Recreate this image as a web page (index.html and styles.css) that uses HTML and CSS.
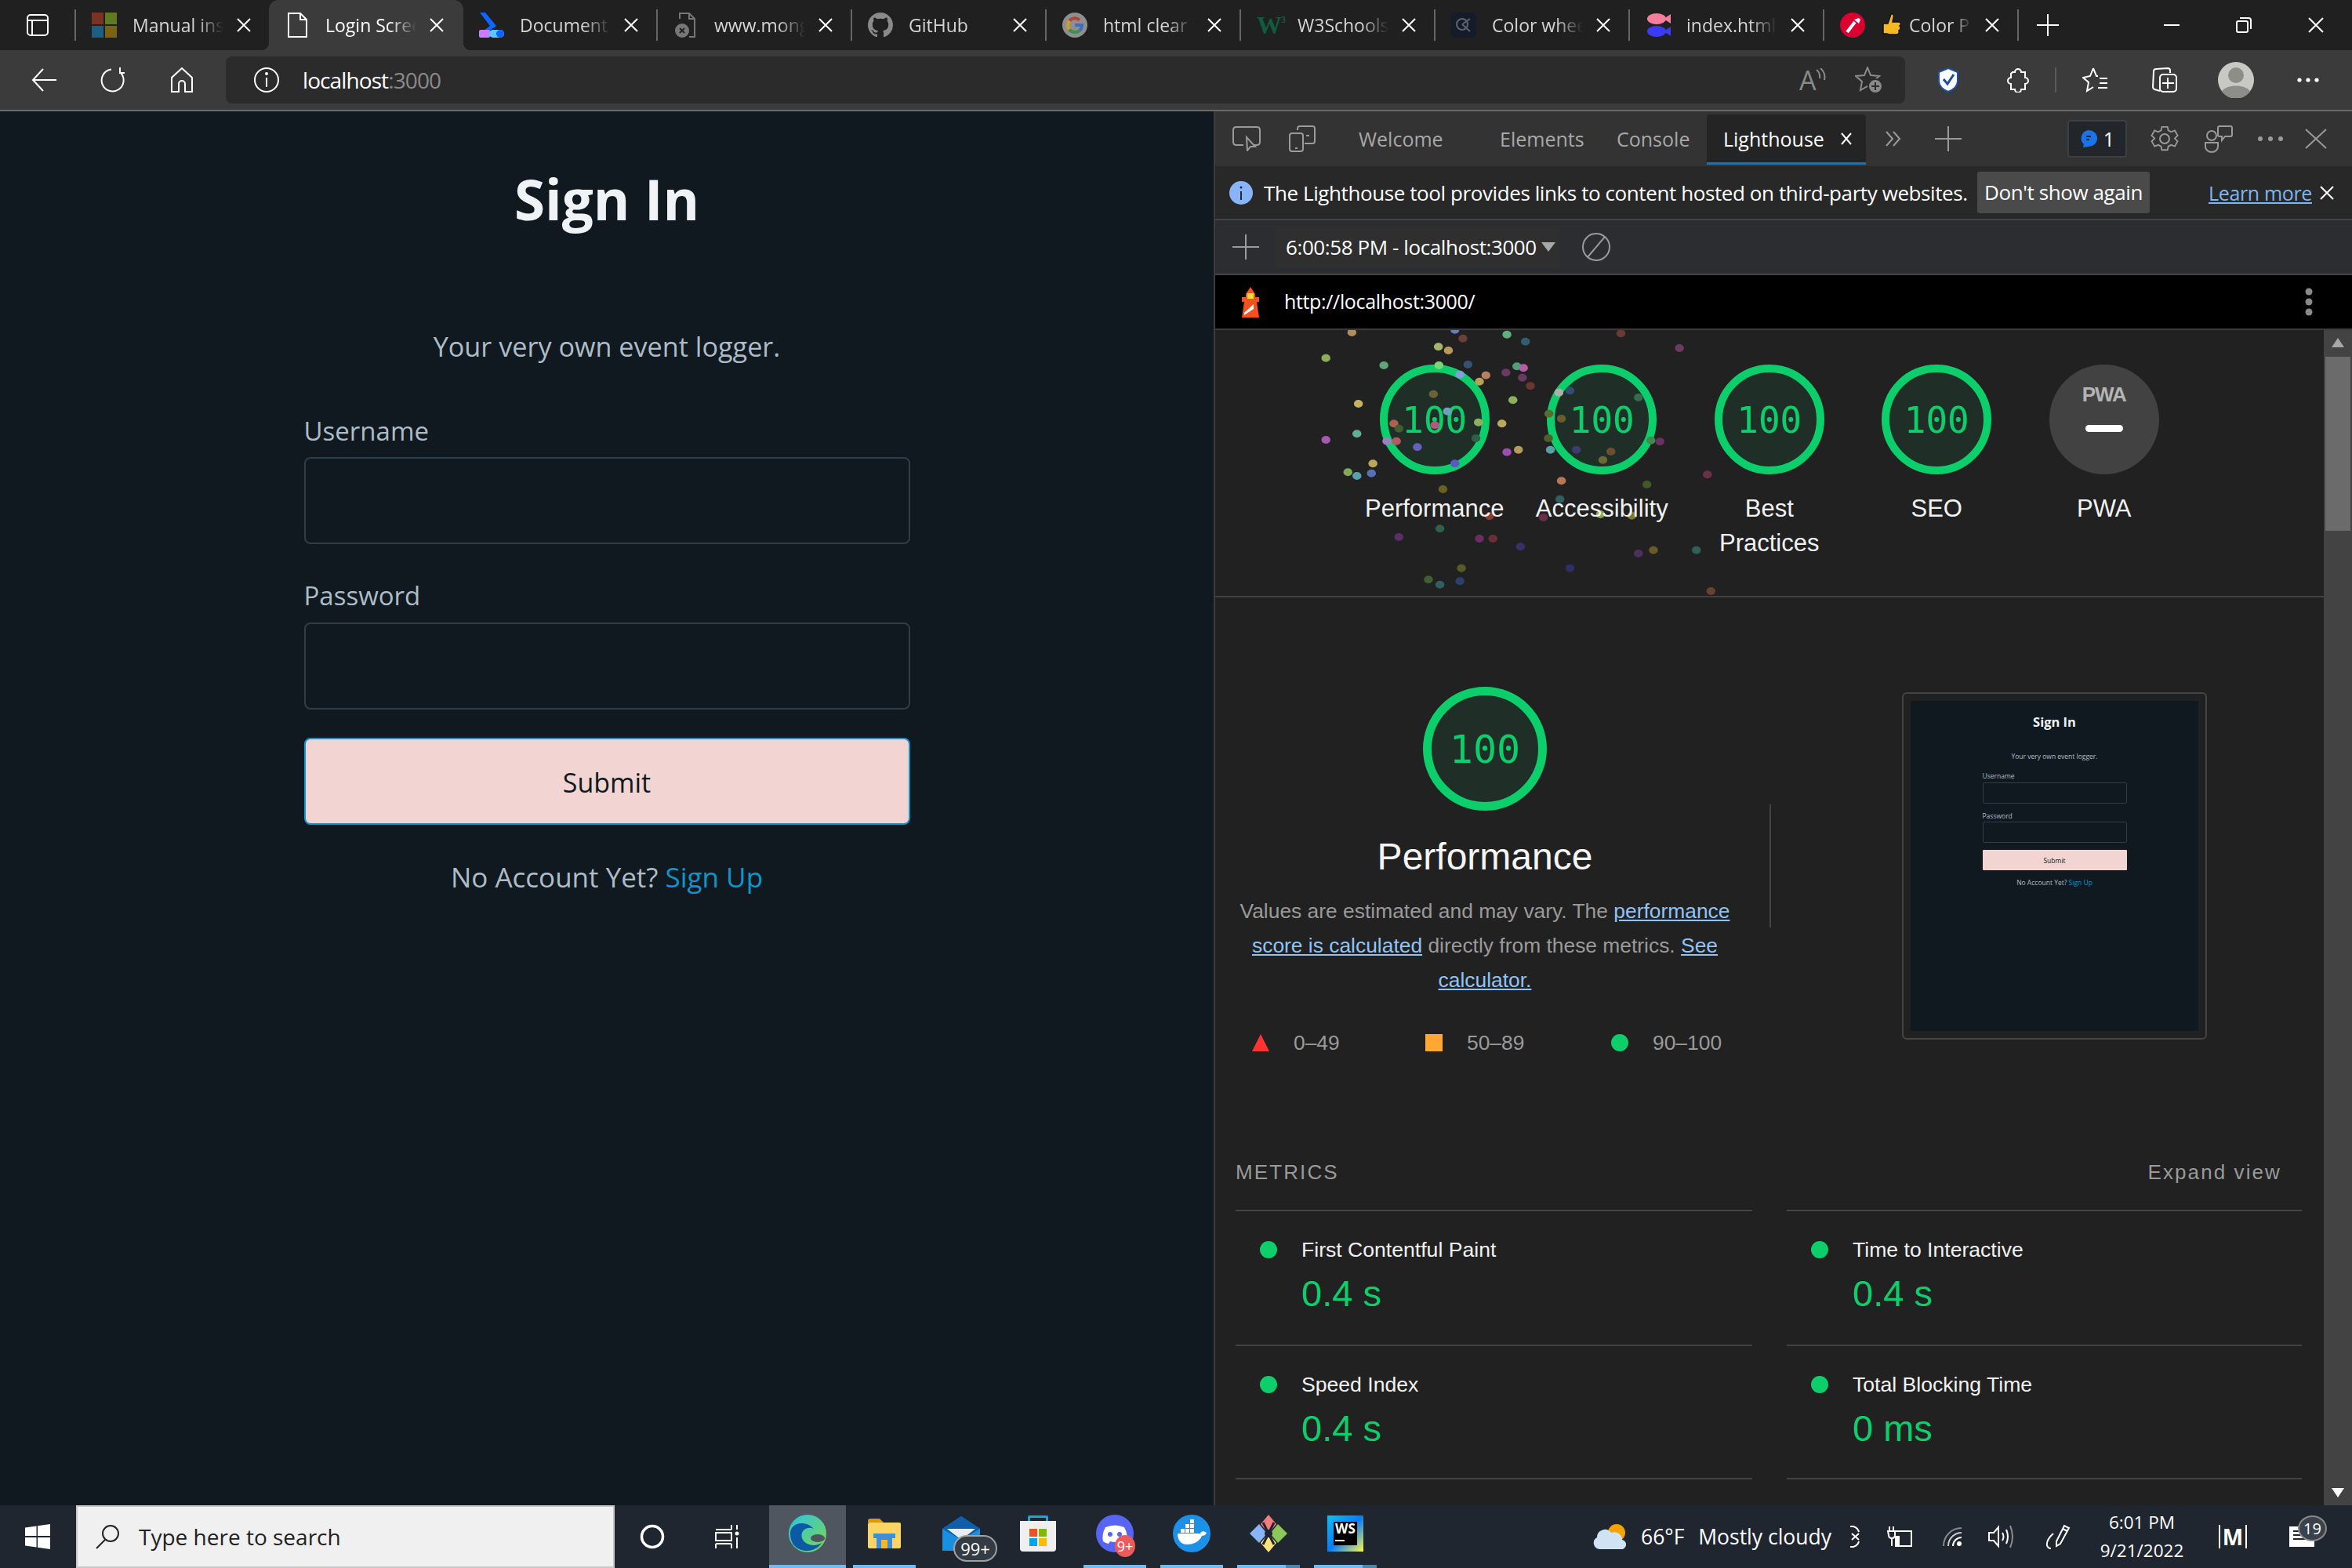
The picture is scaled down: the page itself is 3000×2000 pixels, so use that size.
FILE: index.html
```html
<!DOCTYPE html>
<html lang="en">
<head>
    <meta charset="UTF-8">
    <title>Login Screen - Lighthouse</title>
    <link rel="stylesheet" href="styles.css">
</head>
<body>
<div class="window">

    <!-- tab strip -->
    <div class="tabstrip">
        <svg class="sidebar-icon" width="28" height="28" viewBox="0 0 28 28" fill="none" stroke="#fff" stroke-width="2"><rect x="1" y="1" width="26" height="26" rx="4"/><path d="M1 8H27M7 8V27" /></svg>
        <i class="tab-sep"></i>
        <div class="tab">
            <svg class="favicon" viewBox="0 0 32 32"><rect width="15" height="15" fill="#7a3322"/><rect x="17" width="15" height="15" fill="#5f7a20"/><rect y="17" width="15" height="15" fill="#1c5f80"/><rect x="17" y="17" width="15" height="15" fill="#7a6414"/></svg>
            <span class="tab-title">Manual installation</span>
            <svg class="tab-close" viewBox="0 0 18 18"><path d="M1 1L17 17M17 1L1 17"/></svg>
        </div>
        <div class="tab tab-active">
            <svg class="favicon" viewBox="0 0 32 32" fill="none" stroke="#fff" stroke-width="2"><path d="M5 1H20L28 9V31H5ZM20 1V9H28"/></svg>
            <span class="tab-title">Login Screen</span>
            <svg class="tab-close" viewBox="0 0 18 18"><path d="M1 1L17 17M17 1L1 17"/></svg>
        </div>
        <div class="tab">
            <svg class="favicon" viewBox="0 0 32 32"><path d="M1 0H8L22 17 8 27H1L14 17Z" fill="#0d66ff"/><rect y="22" width="14" height="10" rx="2" fill="#c77dff"/><rect x="13" y="22" width="19" height="10" rx="5" fill="#5cc6ff"/><circle cx="27" cy="27" r="5" fill="#0d66ff"/></svg>
            <span class="tab-title">Document</span>
            <svg class="tab-close" viewBox="0 0 18 18"><path d="M1 1L17 17M17 1L1 17"/></svg>
        </div>
        <i class="tab-sep"></i>
        <div class="tab">
            <svg class="favicon" viewBox="0 0 32 32" fill="none"><path d="M8 8V1H20L27 8V31H20M20 1V8H27" stroke="#777" stroke-width="2"/><circle cx="11" cy="23" r="9" fill="#777"/><path d="M8 20L14 26M14 20L8 26" stroke="#222" stroke-width="2"/></svg>
            <span class="tab-title">www.mongodb.com</span>
            <svg class="tab-close" viewBox="0 0 18 18"><path d="M1 1L17 17M17 1L1 17"/></svg>
        </div>
        <i class="tab-sep"></i>
        <div class="tab">
            <svg class="favicon" viewBox="0 0 16 16"><path fill="#8a8a8a" d="M8 0C3.58 0 0 3.58 0 8c0 3.54 2.29 6.53 5.47 7.59.4.07.55-.17.55-.38 0-.19-.01-.82-.01-1.49-2.01.37-2.53-.49-2.69-.94-.09-.23-.48-.94-.82-1.13-.28-.15-.68-.52-.01-.53.63-.01 1.08.58 1.23.82.72 1.21 1.87.87 2.33.66.07-.52.28-.87.51-1.07-1.78-.2-3.64-.89-3.64-3.95 0-.87.31-1.59.82-2.15-.08-.2-.36-1.02.08-2.12 0 0 .67-.21 2.2.82.64-.18 1.32-.27 2-.27.68 0 1.36.09 2 .27 1.53-1.04 2.2-.82 2.2-.82.44 1.1.16 1.92.08 2.12.51.56.82 1.27.82 2.15 0 3.07-1.87 3.75-3.65 3.95.29.25.54.73.54 1.48 0 1.07-.01 1.93-.01 2.2 0 .21.15.46.55.38A8.013 8.013 0 0016 8c0-4.42-3.58-8-8-8z"/></svg>
            <span class="tab-title">GitHub</span>
            <svg class="tab-close" viewBox="0 0 18 18"><path d="M1 1L17 17M17 1L1 17"/></svg>
        </div>
        <i class="tab-sep"></i>
        <div class="tab">
            <svg class="favicon" viewBox="0 0 32 32" fill="none"><circle cx="16" cy="16" r="16" fill="#8f8f8f"/><g stroke-width="4"><path d="M22 9.500A9 9 0 0 0 9 10.500" stroke="#b0443c"/><path d="M9 10.500A9 9 0 0 0 9 21.500" stroke="#c9a227"/><path d="M9 21.500A9 9 0 0 0 22 23" stroke="#3f8f4f"/><path d="M22 23A9 9 0 0 0 25 16H16" stroke="#3f6fc0"/></g></svg>
            <span class="tab-title">html clear form</span>
            <svg class="tab-close" viewBox="0 0 18 18"><path d="M1 1L17 17M17 1L1 17"/></svg>
        </div>
        <i class="tab-sep"></i>
        <div class="tab">
            <span class="favicon w3-logo">W<sup>3</sup></span>
            <span class="tab-title">W3Schools Online</span>
            <svg class="tab-close" viewBox="0 0 18 18"><path d="M1 1L17 17M17 1L1 17"/></svg>
        </div>
        <i class="tab-sep"></i>
        <div class="tab">
            <svg class="favicon" viewBox="0 0 32 32" fill="none"><rect width="32" height="32" rx="5" fill="#131c28"/><circle cx="14" cy="15" r="7" stroke="#5f656c" stroke-width="2"/><path d="M14 15L24 8M14 15L24 24" stroke="#5f656c" stroke-width="2"/></svg>
            <span class="tab-title">Color wheel</span>
            <svg class="tab-close" viewBox="0 0 18 18"><path d="M1 1L17 17M17 1L1 17"/></svg>
        </div>
        <i class="tab-sep"></i>
        <div class="tab">
            <svg class="favicon" viewBox="0 0 32 32"><ellipse cx="14" cy="8" rx="12" ry="7" fill="#f47e9b"/><path d="M23 8L32 2V14Z" fill="#f47e9b"/><ellipse cx="14" cy="24" rx="12" ry="7" fill="#3b3bf5"/><path d="M23 24L32 18V30Z" fill="#3b3bf5"/></svg>
            <span class="tab-title">index.html</span>
            <svg class="tab-close" viewBox="0 0 18 18"><path d="M1 1L17 17M17 1L1 17"/></svg>
        </div>
        <i class="tab-sep"></i>
        <div class="tab tab-picker">
            <svg class="favicon" viewBox="0 0 32 32"><circle cx="16" cy="16" r="16" fill="#dc0030"/><path d="M9 25L19 12" stroke="#fff" stroke-width="4"/><path d="M18 9L24 7 26 9 24 14Z" fill="#fff"/></svg>
            <svg class="thumb-emoji" width="24" height="32" viewBox="0 0 24 32"><path d="M1 14H7L11 2C14 1 15 4 14 7L13 12H21C24 12 24 16 22 17 24 19 23 22 21 23 22 26 20 28 18 28H9C7 28 7 27 6 27H1Z" fill="#f7b923" stroke="#111" stroke-width="1.500"/></svg>
            <span class="tab-title">Color Picker</span>
            <svg class="tab-close" viewBox="0 0 18 18"><path d="M1 1L17 17M17 1L1 17"/></svg>
        </div>
        <i class="tab-sep"></i>
        <svg class="new-tab" width="28" height="28" viewBox="0 0 28 28"><path d="M14 0V28M0 14H28" stroke="#fff" stroke-width="2"/></svg>
        <div class="window-controls">
            <svg width="20" height="2" viewBox="0 0 20 2"><path d="M0 1H20" stroke="#fff" stroke-width="2"/></svg>
            <svg width="20" height="20" viewBox="0 0 20 20" fill="none" stroke="#fff" stroke-width="2"><rect x="1" y="5" width="14" height="14" rx="2"/><path d="M5 1H16Q19 1 19 4V15"/></svg>
            <svg width="20" height="20" viewBox="0 0 20 20"><path d="M1 1L19 19M19 1L1 19" stroke="#fff" stroke-width="2"/></svg>
        </div>
    </div>

    <!-- address bar -->
    <div class="toolbar">
        <svg class="tb-back" width="32" height="30" viewBox="0 0 32 30" fill="none" stroke="#fff" stroke-width="2"><path d="M2 15H32M15 1L2 15L15 29"/></svg>
        <svg class="tb-reload" width="32" height="32" viewBox="0 0 32 32" fill="none" stroke="#fff" stroke-width="2"><path d="M25 6A14 14 0 1 1 14 2.500"/><path d="M25 0V7H31"/></svg>
        <svg class="tb-home" width="28" height="32" viewBox="0 0 28 32" fill="none" stroke="#fff" stroke-width="2"><path d="M14 1L1 13V31H10V21A4 4 0 0 1 18 21V31H27V13Z"/></svg>
        <div class="address">
            <svg class="addr-info" width="32" height="32" viewBox="0 0 32 32" fill="none" stroke="#fff" stroke-width="2"><circle cx="16" cy="16" r="15"/><path d="M16 13V25"/><circle cx="16" cy="8" r="1"/></svg>
            <span class="addr-text">localhost<span class="addr-port">:3000</span></span>
            <svg class="addr-read" width="34" height="30" viewBox="0 0 34 30" fill="none" stroke="#8a8a8a" stroke-width="2"><text x="0" y="28" fill="#8a8a8a" stroke="none" font-family="Open Sans, sans-serif" font-size="34">A</text><path d="M22 2Q27 6 26 13M27 0Q34 6 32 15"/></svg>
            <svg class="addr-fav" width="36" height="34" viewBox="0 0 36 34" fill="none" stroke="#8a8a8a" stroke-width="2"><path d="M16 1L20 11 31 12 23 19 25 30 16 25 7 30 9 19 1 12 12 11Z"/><circle cx="26" cy="25" r="9" fill="#8a8a8a" stroke="#2b2b2b"/><path d="M26 20V30M21 25H31" stroke="#2b2b2b"/></svg>
        </div>
        <svg class="tb-shield" width="26" height="32" viewBox="0 0 26 32"><path d="M13 1L25 6V17C25 25 18 29 13 31 8 29 1 25 1 17V6Z" fill="#fff" stroke="#1d4fa8" stroke-width="2"/><path d="M7 15L12 21L20 9" fill="none" stroke="#1d4fa8" stroke-width="3"/></svg>
        <svg class="tb-puzzle" width="28" height="32" viewBox="0 0 28 32" fill="none" stroke="#fff" stroke-width="2"><path d="M7 6H10A4 4 0 0 1 18 6H23V13A4 4 0 0 1 23 21V28H18A4 4 0 0 1 10 28H5V21A4 4 0 0 1 5 13V8Z"/></svg>
        <i class="tb-sep"></i>
        <svg class="tb-favs" width="32" height="32" viewBox="0 0 32 32" fill="none" stroke="#fff" stroke-width="2"><path d="M14 1L18 11 20 11M14 1L10 11 1 13 8 19 6 30 14 25M22 14H32M22 20H32M20 26H32"/></svg>
        <svg class="tb-collect" width="32" height="32" viewBox="0 0 32 32" fill="none" stroke="#fff" stroke-width="2"><path d="M10 30L3 28Q1 27 1 25L2 5Q2 2 5 2L20 1Q23 1 23 4V7"/><rect x="10" y="9" width="21" height="22" rx="4"/><path d="M20 13V27M13 20H28"/></svg>
        <svg class="tb-avatar" width="46" height="46" viewBox="0 0 46 46"><circle cx="23" cy="23" r="23" fill="#c9c9c4"/><circle cx="23" cy="17" r="10" fill="#8d8d89"/><path d="M5 38C9 28 37 28 41 38A23 23 0 0 1 5 38Z" fill="#8d8d89"/></svg>
        <svg class="tb-more" width="28" height="6" viewBox="0 0 28 6" fill="#fff"><circle cx="3" cy="3" r="2.600"/><circle cx="14" cy="3" r="2.600"/><circle cx="25" cy="3" r="2.600"/></svg>
    </div>

    <div class="main">
        <!-- the page under test -->
        <div class="page">
            <h1 class="login-title">Sign In</h1>
            <p class="login-tag">Your very own event logger.</p>
            <div class="login-form">
                <label class="login-label login-label-first">Username</label>
                <div class="login-input login-input-first"></div>
                <label class="login-label">Password</label>
                <div class="login-input"></div>
                <div class="login-submit">Submit</div>
            </div>
            <p class="login-foot">No Account Yet? <a class="login-link">Sign Up</a></p>
        </div>

        <!-- devtools -->
        <div class="devtools">
            <div class="dt-tabs">
                <svg class="dt-inspect" width="36" height="32" viewBox="0 0 36 32" fill="none" stroke="#9a9a9a" stroke-width="2"><path d="M14 24H5Q1 24 1 20V5Q1 1 5 1H31Q35 1 35 5V20Q35 24 31 24H28"/><path d="M18 14L19 31 23 26 29 26Z"/></svg>
                <svg class="dt-device" width="34" height="34" viewBox="0 0 34 34" fill="none" stroke="#9a9a9a" stroke-width="2"><path d="M11 6V4Q11 1 14 1H30Q33 1 33 4V20Q33 23 30 23H20"/><rect x="1" y="10" width="17" height="23" rx="3"/><path d="M22 13H26M8 29H11"/></svg>
                <span class="dt-tab dt-tab-welcome">Welcome</span>
                <span class="dt-tab dt-tab-elements">Elements</span>
                <span class="dt-tab dt-tab-console">Console</span>
                <div class="dt-tab-active">
                    <span>Lighthouse</span>
                    <svg width="16" height="16" viewBox="0 0 16 16"><path d="M2 1L14 15M14 1L2 15" stroke="#fff" stroke-width="2"/></svg>
                </div>
                <svg class="dt-overflow" width="22" height="20" viewBox="0 0 22 20" fill="none" stroke="#9a9a9a" stroke-width="2"><path d="M2 1L10 10 2 19M11 1L19 10 11 19"/></svg>
                <svg class="dt-plus" width="34" height="32" viewBox="0 0 34 32"><path d="M17 0V32M0 16H34" stroke="#9a9a9a" stroke-width="2"/></svg>
                <div class="dt-badge">
                    <svg width="22" height="22" viewBox="0 0 22 22"><path d="M11 0A11 10.500 0 0 1 11 21L4 22 5 18A11 10.500 0 0 1 11 0Z" fill="#1a73e8"/><path d="M8 8H14M8 12H12" stroke="#22252a" stroke-width="2"/></svg>
                    <span>1</span>
                </div>
                <svg class="dt-gear" width="36" height="36" viewBox="0 0 36 36" fill="none" stroke="#9a9a9a" stroke-width="2"><path d="M14 2H22L23 7 27 9 32 7 36 14 32 18 36 22 32 29 27 27 23 29 22 34H14L13 29 9 27 4 29 0 22 4 18 0 14 4 7 9 9 13 7Z" transform="translate(1.500 1) scale(.92)"/><circle cx="18" cy="18" r="6"/></svg>
                <svg class="dt-people" width="36" height="36" viewBox="0 0 36 36" fill="none" stroke="#9a9a9a" stroke-width="2"><circle cx="9" cy="14" r="6"/><path d="M1 23H17V28A8 7 0 0 1 1 28Z"/><path d="M19 2H33Q35 2 35 4V13Q35 15 33 15H26L22 20V15H19Q17 15 17 13V4Q17 2 19 2Z"/></svg>
                <svg class="dt-more" width="34" height="6" viewBox="0 0 34 6" fill="#9a9a9a"><circle cx="4" cy="3" r="3"/><circle cx="17" cy="3" r="3"/><circle cx="30" cy="3" r="3"/></svg>
                <svg class="dt-close" width="28" height="26" viewBox="0 0 28 26"><path d="M1 1L27 25M27 1L1 25" stroke="#9a9a9a" stroke-width="2"/></svg>
            </div>

            <div class="dt-info">
                <svg class="info-icon" width="30" height="30" viewBox="0 0 30 30"><circle cx="15" cy="15" r="15" fill="#8ab4f8"/><path d="M15 13V24" stroke="#282828" stroke-width="2"/><circle cx="15" cy="8" r="1.500" fill="#282828"/></svg>
                <span class="info-text">The Lighthouse tool provides links to content hosted on third-party websites.</span>
                <span class="info-btn">Don't show again</span>
                <a class="info-learn">Learn more</a>
                <svg class="info-close" width="18" height="18" viewBox="0 0 18 18"><path d="M1 1L17 17M17 1L1 17" stroke="#fff" stroke-width="2"/></svg>
            </div>

            <div class="dt-bar">
                <svg class="bar-plus" width="34" height="32" viewBox="0 0 34 32"><path d="M17 0V32M0 16H34" stroke="#9a9a9a" stroke-width="2"/></svg>
                <div class="bar-select">
                    <span>6:00:58 PM - localhost:3000</span>
                    <i class="bar-caret"></i>
                </div>
                <svg class="bar-clear" width="36" height="36" viewBox="0 0 36 36" fill="none" stroke="#9a9a9a" stroke-width="2"><circle cx="18" cy="18" r="17"/><path d="M7 31L29 5"/></svg>
            </div>

            <div class="dt-url">
                <svg class="url-logo" width="26" height="39" viewBox="0 0 26 39"><path d="M13 0L19 9V13H24V19H21L24 39H2L5 19H2V13H7V9Z" fill="#f4511e"/><rect x="9" y="8" width="8" height="7" fill="#fdd835"/><path d="M5 33L17 22V28L5 36Z" fill="#fff"/></svg>
                <span class="url-text">http://localhost:3000/</span>
                <svg class="url-kebab" width="10" height="36" viewBox="0 0 10 36" fill="#8a8a8a"><circle cx="5" cy="5" r="4.500"/><circle cx="5" cy="18" r="4.500"/><circle cx="5" cy="31" r="4.500"/></svg>
            </div>

            <div class="dt-body">
                <div class="report">
                    <div class="gauges">
                        <svg class="confetti" width="1000" height="360" viewBox="0 0 1568 1080" preserveAspectRatio="none">
                            <ellipse cx="195" cy="42" fill="#b08d5c"/><ellipse cx="401" cy="32" fill="#5f7fc0"/><ellipse cx="417" cy="65" fill="#6b3f35"/><ellipse cx="505" cy="50" fill="#5fae7c"/><ellipse cx="542" cy="77" fill="#2f5f70"/><ellipse cx="733" cy="46" fill="#6b3a32"/><ellipse cx="850" cy="102" fill="#6b3a5f"/><ellipse cx="143" cy="140" fill="#8aae5a"/><ellipse cx="368" cy="97" fill="#a5b56f"/><ellipse cx="388" cy="111" fill="#b89a5a"/><ellipse cx="259" cy="168" fill="#5fa77a"/><ellipse cx="369" cy="168" fill="#78d878"/><ellipse cx="427" cy="165" fill="#355270"/><ellipse cx="525" cy="172" fill="#4f9f7a"/><ellipse cx="538" cy="178" fill="#b060a0"/><ellipse cx="503" cy="196" fill="#6a3a65"/><ellipse cx="411" cy="203" fill="#7fa0d8"/><ellipse cx="463" cy="206" fill="#b88060"/><ellipse cx="450" cy="230" fill="#b8a058"/><ellipse cx="536" cy="215" fill="#6a3a60"/><ellipse cx="552" cy="247" fill="#6b3632"/><ellipse cx="631" cy="265" fill="#2f4f70"/><ellipse cx="609" cy="272" fill="#b0b0a8"/><ellipse cx="358" cy="278" fill="#6b6338"/><ellipse cx="517" cy="301" fill="#8ab060"/><ellipse cx="768" cy="291" fill="#356b4f"/><ellipse cx="208" cy="315" fill="#c8b060"/><ellipse cx="589" cy="353" fill="#5a6a30"/><ellipse cx="386" cy="344" fill="#6f9fc0"/><ellipse cx="614" cy="372" fill="#6b5c30"/><ellipse cx="448" cy="386" fill="#90b060"/><ellipse cx="495" cy="391" fill="#b8a860"/><ellipse cx="279" cy="391" fill="#b06050"/><ellipse cx="289" cy="410" fill="#3f5f30"/><ellipse cx="361" cy="397" fill="#b05a80"/><ellipse cx="205" cy="430" fill="#5faf90"/><ellipse cx="143" cy="453" fill="#a858b0"/><ellipse cx="443" cy="447" fill="#2f6045"/><ellipse cx="588" cy="447" fill="#4a5f2a"/><ellipse cx="265" cy="458" fill="#9a80c0"/><ellipse cx="284" cy="458" fill="#b85860"/><ellipse cx="811" cy="460" fill="#6a3060"/><ellipse cx="793" cy="455" fill="#3f8a50"/><ellipse cx="326" cy="481" fill="#6860b8"/><ellipse cx="505" cy="500" fill="#9a50b0"/><ellipse cx="528" cy="491" fill="#b89a58"/><ellipse cx="592" cy="491" fill="#58a0a0"/><ellipse cx="644" cy="491" fill="#3f3a70"/><ellipse cx="713" cy="498" fill="#6a5030"/><ellipse cx="697" cy="530" fill="#6a6a30"/><ellipse cx="237" cy="544" fill="#b8a858"/><ellipse cx="401" cy="544" fill="#5858c8"/><ellipse cx="187" cy="577" fill="#80a858"/><ellipse cx="205" cy="591" fill="#58a0b0"/><ellipse cx="234" cy="581" fill="#5870b8"/><ellipse cx="906" cy="586" fill="#6a3048"/><ellipse cx="614" cy="610" fill="#b87858"/><ellipse cx="785" cy="624" fill="#3f5a28"/><ellipse cx="377" cy="642" fill="#6a6020"/><ellipse cx="611" cy="680" fill="#2f5f60"/><ellipse cx="470" cy="745" fill="#8a3a30"/><ellipse cx="578" cy="750" fill="#6a2f48"/><ellipse cx="692" cy="738" fill="#8aa850"/><ellipse cx="755" cy="743" fill="#7a7a30"/><ellipse cx="371" cy="793" fill="#2f6048"/><ellipse cx="289" cy="825" fill="#5a2f68"/><ellipse cx="450" cy="831" fill="#6a2f60"/><ellipse cx="477" cy="831" fill="#6a3038"/><ellipse cx="532" cy="862" fill="#38306a"/><ellipse cx="768" cy="888" fill="#4f2f60"/><ellipse cx="798" cy="875" fill="#6a5a28"/><ellipse cx="884" cy="875" fill="#2f6058"/><ellipse cx="414" cy="944" fill="#5a5a28"/><ellipse cx="631" cy="944" fill="#2f2f68"/><ellipse cx="348" cy="988" fill="#3f602f"/><ellipse cx="371" cy="1007" fill="#2f5f60"/><ellipse cx="411" cy="994" fill="#2f4068"/><ellipse cx="913" cy="1032" fill="#6b4030"/>
                        </svg>
                        <div class="gauge">
                            <div class="gauge-ring">100</div>
                            <div class="gauge-label">Performance</div>
                        </div>
                        <div class="gauge">
                            <div class="gauge-ring">100</div>
                            <div class="gauge-label">Accessibility</div>
                        </div>
                        <div class="gauge">
                            <div class="gauge-ring">100</div>
                            <div class="gauge-label">Best<br>Practices</div>
                        </div>
                        <div class="gauge">
                            <div class="gauge-ring">100</div>
                            <div class="gauge-label">SEO</div>
                        </div>
                        <div class="gauge">
                            <div class="gauge-ring gauge-pwa">
                                <span class="pwa-text">PWA</span>
                                <i class="pwa-dash"></i>
                            </div>
                            <div class="gauge-label">PWA</div>
                        </div>
                    </div>

                    <div class="perf-top">
                        <div class="perf-summary">
                            <div class="gauge-ring gauge-big">100</div>
                            <div class="perf-title">Performance</div>
                            <p class="perf-desc">Values are estimated and may vary. The <a>performance score is calculated</a> directly from these metrics. <a>See calculator.</a></p>
                            <div class="legend">
                                <div class="legend-item"><i class="mark-fail"></i>0–49</div>
                                <div class="legend-item"><i class="mark-avg"></i>50–89</div>
                                <div class="legend-item"><i class="mark-pass"></i>90–100</div>
                            </div>
                        </div>
                        <i class="perf-divider"></i>
                        <div class="thumb-frame">
                            <div class="thumb">
                                <div class="thumb-title">Sign In</div>
                                <div class="thumb-tag">Your very own event logger.</div>
                                <div class="thumb-form">
                                    <div class="thumb-label thumb-label-first">Username</div>
                                    <div class="thumb-input thumb-input-first"></div>
                                    <div class="thumb-label">Password</div>
                                    <div class="thumb-input"></div>
                                    <div class="thumb-submit">Submit</div>
                                </div>
                                <div class="thumb-foot">No Account Yet? <span>Sign Up</span></div>
                            </div>
                        </div>
                    </div>

                    <div class="metrics-head">
                        <span class="metrics-title">METRICS</span>
                        <span class="metrics-expand">Expand view</span>
                    </div>
                    <div class="metrics">
                        <div class="metric">
                            <div class="metric-name"><i class="mark-pass"></i>First Contentful Paint</div>
                            <div class="metric-value">0.4 s</div>
                        </div>
                        <div class="metric">
                            <div class="metric-name"><i class="mark-pass"></i>Time to Interactive</div>
                            <div class="metric-value">0.4 s</div>
                        </div>
                        <div class="metric">
                            <div class="metric-name"><i class="mark-pass"></i>Speed Index</div>
                            <div class="metric-value">0.4 s</div>
                        </div>
                        <div class="metric">
                            <div class="metric-name"><i class="mark-pass"></i>Total Blocking Time</div>
                            <div class="metric-value">0 ms</div>
                        </div>
                    </div>
                </div>
                <div class="scrollbar">
                    <i class="scroll-up"></i>
                    <i class="scroll-thumb"></i>
                    <i class="scroll-down"></i>
                </div>
            </div>
        </div>
    </div>

    <!-- windows taskbar -->
    <div class="taskbar">
        <svg class="tk-win" width="32" height="32" viewBox="0 0 32 32" fill="#fff"><path d="M0 4.500L14.500 2.500V15H0ZM16 2.300L32 0V15H16ZM0 17H14.500V29.500L0 27.500ZM16 17H32V32L16 29.700Z"/></svg>
        <div class="tk-search">
            <svg width="32" height="32" viewBox="0 0 32 32" fill="none" stroke="#222" stroke-width="2"><circle cx="20" cy="12" r="10"/><path d="M13 20L2 31"/></svg>
            <span>Type here to search</span>
        </div>
        <svg class="tk-cortana" width="32" height="32" viewBox="0 0 32 32" fill="none" stroke="#fff" stroke-width="3.500"><circle cx="16" cy="16" r="13.500"/></svg>
        <svg class="tk-tasks" width="31" height="30" viewBox="0 0 31 30" fill="none" stroke="#fff" stroke-width="2"><path d="M1 6H21M21 0V6M1 24H21M1 30V24M21 30V24M1 10H21V20H1Z"/><circle cx="28" cy="11" r="2.500" fill="#fff" stroke="none"/><path d="M28 16V30M28 0V6"/></svg>

        <div class="tk-apps">
            <div class="app app-current running">
                <svg width="48" height="48" viewBox="0 0 48 48"><defs><linearGradient id="edgeA" x1="0" y1="0" x2="1" y2="1"><stop offset="0" stop-color="#2cc3e0"/><stop offset="1" stop-color="#7bd94f"/></linearGradient></defs><circle cx="24" cy="24" r="24" fill="url(#edgeA)"/><path d="M2 24C2 10 22 6 32 18 24 14 14 20 17 30 20 38 32 42 42 36 32 52 2 50 2 24Z" fill="#0c59a4"/><ellipse cx="37" cy="30" rx="9" ry="5" fill="#4f5660"/></svg>
            </div>
            <div class="app running">
                <svg width="44" height="40" viewBox="0 0 44 40"><path d="M1 4Q1 1 4 1H16L21 6H1Z" fill="#d99a00"/><rect x="1" y="6" width="42" height="33" rx="2" fill="#fcd462"/><path d="M8 20H36V26H32V39H26V28H18V39H12V26H8Z" fill="#3f8fd8"/><rect x="18" y="28" width="8" height="11" fill="#f5b72b"/></svg>
            </div>
            <div class="app">
                <svg width="48" height="44" viewBox="0 0 48 44"><path d="M24 0L48 16V44H0V16Z" fill="#1a8fe0"/><path d="M24 0L48 16 24 30 0 16Z" fill="#0c5fa8"/><path d="M6 16H42L24 30Z" fill="#e8eef2"/></svg>
                <span class="tk-badge tk-badge-mail">99+</span>
            </div>
            <div class="app">
                <svg width="46" height="46" viewBox="0 0 46 46"><path d="M10 8V2Q10 0 12 0H34Q36 0 36 2V8H33V3H13V8Z" fill="#19a7d8"/><path d="M0 7H46V42Q46 46 42 46H4Q0 46 0 42Z" fill="#efefef"/><rect x="12" y="17" width="10" height="10" fill="#f25022"/><rect x="24" y="17" width="10" height="10" fill="#7fba00"/><rect x="12" y="29" width="10" height="10" fill="#00a4ef"/><rect x="24" y="29" width="10" height="10" fill="#ffb900"/></svg>
            </div>
            <div class="app running">
                <svg width="48" height="48" viewBox="0 0 48 48"><circle cx="24" cy="24" r="24" fill="#5865f2"/><path d="M12 16Q24 11 36 16 41 25 39 34 35 37 32 37L30 34Q24 36 18 34L16 37Q13 37 9 34 7 25 12 16Z" fill="#fff"/><circle cx="18" cy="25" r="3" fill="#5865f2"/><circle cx="30" cy="25" r="3" fill="#5865f2"/></svg>
                <span class="tk-badge tk-badge-discord">9+</span>
            </div>
            <div class="app running">
                <svg width="48" height="48" viewBox="0 0 48 48"><circle cx="24" cy="24" r="24" fill="#1d91e8"/><path d="M6 24H35C36 21 39 20 43 23 42 26 39 27 37 27 34 34 27 38 18 38 10 38 6 32 6 24Z" fill="#fff"/><g fill="#fff"><rect x="10" y="18" width="5" height="5"/><rect x="16" y="18" width="5" height="5"/><rect x="22" y="18" width="5" height="5"/><rect x="16" y="12" width="5" height="5"/><rect x="22" y="12" width="5" height="5"/><rect x="22" y="6" width="5" height="5"/></g></svg>
            </div>
            <div class="app running running-multi">
                <svg width="48" height="48" viewBox="0 0 48 48"><path d="M24 0L34 12 24 24 14 12Z" fill="#f47c7c"/><path d="M36 12L48 24 36 36 26 24Z" fill="#8dc75a"/><path d="M24 24L34 36 24 48 14 36Z" fill="#fce37a"/><path d="M12 12L22 24 12 36 0 24Z" fill="#8ab4f8"/><circle cx="24" cy="24" r="5" fill="#1e2530"/><path d="M17 10L31 38M31 10L17 38" stroke="#1e2530" stroke-width="3"/></svg>
            </div>
            <div class="app running running-multi">
                <div class="ws-logo"><span class="ws-box">WS<i></i></span></div>
            </div>
        </div>

        <div class="tray">
            <svg class="tray-weather" width="42" height="32" viewBox="0 0 42 32"><circle cx="30" cy="11" r="11" fill="#f5a300"/><path d="M8 32A8 8 0 0 1 5 17 10 10 0 0 1 23 11 10 10 0 0 1 37 20 6 6 0 0 1 35 32Z" fill="#cfe3f5"/></svg>
            <div class="tray-temp"><span>66°F</span><span>Mostly cloudy</span></div>
            <svg class="tray-meet" width="14" height="28" viewBox="0 0 14 28" fill="none" stroke="#fff" stroke-width="2"><path d="M1 1H5Q11 3 12 8M1 27H5Q11 25 12 20M3 10L12 18M12 10L3 18"/></svg>
            <svg class="tray-power" width="32" height="26" viewBox="0 0 32 26" fill="none" stroke="#fff" stroke-width="2"><path d="M10 6H31V25H10M3 0V6M8 0V6M1 6H10V11Q10 15 6 15Q2 15 2 11ZM6 15V25"/><rect x="10" y="12" width="6" height="13" fill="#fff" stroke="none"/></svg>
            <svg class="tray-wifi" width="25" height="25" viewBox="0 0 25 25" fill="none" stroke="#8a8a8a" stroke-width="2"><path d="M1 24A23 23 0 0 1 24 1"/><path d="M7 24A17 17 0 0 1 24 7" stroke="#c8c8c8"/><path d="M13 24A11 11 0 0 1 24 13" stroke="#fff"/><circle cx="21" cy="21" r="3" fill="#fff" stroke="none"/></svg>
            <svg class="tray-volume" width="32" height="30" viewBox="0 0 32 30" fill="none" stroke="#fff" stroke-width="2"><path d="M1 10H7L13 3V27L7 20H1Z"/><path d="M18 10Q21 15 18 20M23 6Q27 15 23 24"/><path d="M28 1Q34 15 28 29" stroke="#8a8a8a"/></svg>
            <svg class="tray-pen" width="33" height="32" viewBox="0 0 33 32" fill="none" stroke="#fff" stroke-width="2"><path d="M14 22L24 2 30 5 19 25 14 28ZM22 6L28 9"/><path d="M10 12Q1 20 2 27Q3 31 7 31" /></svg>
            <div class="tray-clock"><span>6:01 PM</span><span>9/21/2022</span></div>
            <div class="tray-m">M</div>
            <div class="tray-notify">
                <svg width="32" height="26" viewBox="0 0 32 26"><rect width="32" height="26" fill="#fff"/><path d="M5 6H27M5 11H27M5 16H27" stroke="#1f2630" stroke-width="2"/></svg>
                <span class="tk-badge tk-badge-notify">19</span>
            </div>
        </div>
    </div>
</div>
</body>
</html>
```

FILE: styles.css
```css
* {
    box-sizing: border-box;
}

body {
    margin: 0;
    background-color: #111920;
    font-family: "Open Sans", "Liberation Sans", sans-serif;
    color: #fff;
}

a {
    color: inherit;
}

i {
    display: block;
    flex: none;
}

svg {
    display: block;
    flex: none;
}

.window {
    width: 3000px;
    height: 2000px;
    display: flex;
    flex-direction: column;
    overflow: hidden;
}

/* ---- tab strip ---- */
.tabstrip {
    height: 64px;
    background-color: #202020;
    display: flex;
    align-items: center;
    flex: none;
}

.sidebar-icon {
    margin-left: 34px;
    margin-right: 33px;
}

.tab-sep {
    width: 2px;
    height: 40px;
    background-color: #666;
}

.tab {
    width: 246px;
    height: 64px;
    padding-left: 20px;
    display: flex;
    align-items: center;
    position: relative;
}

.tab-active {
    width: 248px;
    background-color: #3b3b3b;
    border-radius: 12px 12px 0 0;
}

.tab-active::before,
.tab-active::after {
    content: "";
    position: absolute;
    bottom: 0;
    width: 10px;
    height: 10px;
}

.tab-active::before {
    left: -10px;
    background: radial-gradient(circle at 0 0, transparent 10px, #3b3b3b 10.500px);
}

.tab-active::after {
    right: -10px;
    background: radial-gradient(circle at 100% 0, transparent 10px, #3b3b3b 10.500px);
}

.favicon {
    width: 32px;
    height: 32px;
    flex: none;
    margin-right: 20px;
}

.tab-title {
    width: 116px;
    flex: none;
    font-size: 23px;
    line-height: 32px;
    color: #d4d4d4;
    white-space: nowrap;
    overflow: hidden;
    -webkit-mask-image: linear-gradient(to right, #000 70%, transparent 100%);
    mask-image: linear-gradient(to right, #000 70%, transparent 100%);
}

.tab-active .tab-title {
    color: #fff;
}

.tab-close {
    width: 18px;
    height: 18px;
    margin-left: 17px;
    fill: none;
    stroke: #fff;
    stroke-width: 2;
}

.tab-picker .favicon {
    margin-right: 22px;
}

.thumb-emoji {
    margin-right: 10px;
}

.tab-picker .tab-title {
    width: 80px;
}

.w3-logo {
    font-family: "Liberation Serif", serif;
    font-weight: bold;
    font-size: 32px;
    line-height: 32px;
    color: #0f5c40;
    letter-spacing: -1px;
    white-space: nowrap;
}

.w3-logo sup {
    font-size: 12px;
    line-height: 0;
    vertical-align: 14px;
}

.new-tab {
    margin-left: 23px;
}

.window-controls {
    margin-left: auto;
    display: flex;
    align-items: center;
    gap: 72px;
    padding-right: 36px;
}

/* ---- toolbar ---- */
.toolbar {
    height: 78px;
    flex: none;
    background-color: #3b3b3b;
    border-bottom: 2px solid #6a6a6a;
    display: flex;
    align-items: center;
}

.tb-back { margin-left: 40px; }
.tb-reload { margin-left: 56px; }
.tb-home { margin-left: 58px; }

.address {
    width: 2142px;
    height: 60px;
    margin-left: 42px;
    background-color: #2b2b2b;
    border-radius: 8px;
    display: flex;
    align-items: center;
}

.addr-info { margin-left: 36px; }

.addr-text {
    margin-left: 30px;
    font-size: 28px;
    letter-spacing: -0.9px;
}

.addr-port {
    color: #8a8a8a;
}

.addr-read { margin-left: auto; }

.addr-fav {
    margin-left: 37px;
    margin-right: 28px;
}

.tb-shield { margin-left: 42px; }
.tb-puzzle { margin-left: 62px; }

.tb-sep {
    width: 2px;
    height: 32px;
    margin-left: 33px;
    background-color: #5a5a5a;
}

.tb-favs { margin-left: 33px; }
.tb-collect { margin-left: 57px; }
.tb-avatar { margin-left: 52px; }
.tb-more { margin-left: 55px; }

/* ---- main split ---- */
.main {
    flex: 1;
    min-height: 0;
    display: flex;
}

/* ---- login page ---- */
.page {
    width: 1548px;
    flex: none;
    background-color: #111920;
    padding-top: 67px;
    display: flex;
    flex-direction: column;
    align-items: center;
}

.login-title {
    margin: 0;
    font-size: 71px;
    line-height: 90px;
    font-weight: 700;
    color: #f0f3f6;
}

.login-tag {
    margin: 118px 0 0;
    font-size: 34.200px;
    line-height: 50px;
    color: #adbcc6;
}

.login-form {
    width: 773px;
}

.login-label {
    display: block;
    margin-top: 43px;
    font-size: 33px;
    line-height: 46px;
    color: #adbcc6;
}

.login-label-first {
    margin-top: 60px;
}

.login-input {
    height: 111px;
    margin-top: 11px;
    border: 2px solid #2f3d48;
    border-radius: 8px;
    background-color: #101820;
}

.login-input-first {
    margin-top: 10px;
}

.login-submit {
    height: 111px;
    margin-top: 36px;
    border: 2px solid #1095c8;
    border-radius: 8px;
    background-color: #f2d5d2;
    color: #111920;
    font-size: 34px;
    line-height: 111px;
    text-align: center;
}

.login-foot {
    margin: 42px 0 0;
    font-size: 35px;
    line-height: 50px;
    color: #adbcc6;
}

.login-link {
    color: #1095c8;
}

/* ---- devtools chrome ---- */
.devtools {
    flex: 1;
    min-width: 0;
    border-left: 2px solid #3c3c3c;
    display: flex;
    flex-direction: column;
    background-color: #212121;
}

.dt-tabs {
    height: 70px;
    flex: none;
    background-color: #333;
    display: flex;
    align-items: center;
    position: relative;
    font-size: 25px;
    color: #a8a8a8;
}

.dt-inspect { margin-left: 22px; }
.dt-device { margin-left: 36px; }

.dt-tab {
    white-space: nowrap;
}

.dt-tab-welcome { margin-left: 55px; width: 180px; }
.dt-tab-elements { width: 149px; }
.dt-tab-console { width: 115px; }

.dt-tab-active {
    height: 64px;
    width: 203px;
    align-self: flex-end;
    margin-bottom: 2px;
    padding-left: 21px;
    background-color: #242424;
    border-bottom: 3px solid #0078d4;
    border-radius: 4px 4px 0 0;
    display: flex;
    align-items: center;
    gap: 20px;
    color: #fff;
}

.dt-overflow { margin-left: 24px; }
.dt-plus { margin-left: 42px; }

.dt-badge {
    width: 76px;
    height: 48px;
    margin-left: 135px;
    background-color: #22252a;
    border: 2px solid #3c3f44;
    border-radius: 4px;
    display: flex;
    align-items: center;
    justify-content: center;
    gap: 8px;
    color: #fff;
}

.dt-gear { margin-left: 30px; }
.dt-people { margin-left: 33px; }
.dt-more { margin-left: 31px; }
.dt-close { margin-left: 27px; }

.dt-info {
    height: 69px;
    flex: none;
    background-color: #282828;
    border-bottom: 2px solid #444;
    display: flex;
    align-items: center;
    font-size: 26px;
}

.info-icon { margin-left: 18px; }

.info-text {
    margin-left: 14px;
    width: 910px;
    white-space: nowrap;
    letter-spacing: -0.41px;
}

.info-btn {
    width: 220px;
    height: 53px;
    background-color: #4a4a4a;
    border-radius: 3px;
    text-align: center;
    line-height: 53px;
    letter-spacing: -0.41px;
    white-space: nowrap;
}

.info-learn {
    margin-left: 75px;
    font-size: 25px;
    color: #7cb7f0;
    text-decoration: underline;
    white-space: nowrap;
    letter-spacing: -0.35px;
}

.info-close { margin-left: 10px; }

.dt-bar {
    height: 70px;
    flex: none;
    background-color: #2b2d30;
    border-bottom: 2px solid #444;
    display: flex;
    align-items: center;
}

.bar-plus { margin-left: 22px; }

.bar-select {
    width: 363px;
    height: 52px;
    margin-left: 21px;
    padding-left: 13px;
    background-color: #2f2f2f;
    display: flex;
    align-items: center;
    font-size: 26px;
    letter-spacing: -0.41px;
    white-space: nowrap;
}

.bar-caret {
    width: 0;
    height: 0;
    margin-left: 6px;
    border-left: 9px solid transparent;
    border-right: 9px solid transparent;
    border-top: 12px solid #a8a8a8;
}

.bar-clear { margin-left: 28px; }

.dt-url {
    height: 70px;
    flex: none;
    background-color: #000;
    border-bottom: 2px solid #3c3c3c;
    display: flex;
    align-items: center;
}

.url-logo { margin-left: 32px; }

.url-text {
    margin-left: 30px;
    padding-bottom: 2px;
    font-size: 25px;
    letter-spacing: -0.35px;
}

.url-kebab {
    margin-left: auto;
    margin-right: 50px;
}

/* ---- lighthouse report ---- */
.dt-body {
    flex: 1;
    min-height: 0;
    display: flex;
}

.report {
    flex: 1;
    min-width: 0;
    overflow: hidden;
    background-color: #212121;
    font-family: "Liberation Sans", Arial, sans-serif;
}

.scrollbar {
    width: 36px;
    flex: none;
    background-color: #434343;
    display: flex;
    flex-direction: column;
    align-items: center;
    padding-top: 10px;
}

.scroll-up {
    border-left: 8px solid transparent;
    border-right: 8px solid transparent;
    border-bottom: 12px solid #a8a8a8;
}

.scroll-thumb {
    width: 32px;
    height: 222px;
    margin-top: 12px;
    background-color: #6b6b6b;
}

.scroll-down {
    margin-top: auto;
    margin-bottom: 10px;
    border-left: 8px solid transparent;
    border-right: 8px solid transparent;
    border-top: 12px solid #fff;
}

.gauges {
    height: 341px;
    padding: 44px 0 0 173px;
    border-bottom: 2px solid #424242;
    display: flex;
    position: relative;
    overflow: hidden;
}

.confetti {
    position: absolute;
    left: 50px;
    top: -11px;
    z-index: 1;
}

.confetti ellipse {
    rx: 9px;
    ry: 15px;
}

.gauge {
    width: 213.500px;
    flex: none;
    display: flex;
    flex-direction: column;
    align-items: center;
}

.gauge-ring {
    width: 140px;
    height: 140px;
    flex: none;
    padding-top: 2px;
    border: 10px solid #0cce6b;
    border-radius: 50%;
    background-color: #1f2e27;
    color: #0cce6b;
    font-family: "DejaVu Sans Mono", monospace;
    font-size: 46px;
    display: flex;
    align-items: center;
    justify-content: center;
}

.gauge-label {
    margin-top: 22px;
    font-size: 31px;
    line-height: 44px;
    text-align: center;
    color: #f2f2f2;
    position: relative;
    z-index: 2;
}

.gauge-pwa {
    padding-top: 0;
    border: none;
    background-color: #424242;
    flex-direction: column;
    gap: 26px;
}

.pwa-text {
    font-family: "Liberation Sans", Arial, sans-serif;
    font-weight: bold;
    font-size: 26px;
    line-height: 26px;
    letter-spacing: -1px;
    color: #b4b4b4;
    margin-top: -30px;
}

.pwa-dash {
    width: 48px;
    height: 9px;
    border-radius: 5px;
    background-color: #fff;
}

.perf-top {
    padding-top: 114px;
    display: flex;
    align-items: flex-start;
}

.perf-summary {
    width: 688px;
    flex: none;
    display: flex;
    flex-direction: column;
    align-items: center;
}

.gauge-big {
    width: 158px;
    height: 158px;
    border-width: 11px;
    font-size: 50px;
}

.perf-title {
    margin-top: 29px;
    font-size: 48px;
    line-height: 60px;
    color: #f5f5f5;
}

.perf-desc {
    width: 640px;
    margin: 17px 0 0;
    font-size: 26.400px;
    line-height: 44px;
    text-align: center;
    color: #9a9a9a;
}

.perf-desc a {
    color: #8fc4f5;
    text-decoration: underline;
}

.legend {
    width: 100%;
    margin-top: 43px;
    padding-left: 47px;
    display: grid;
    grid-template-columns: 221px 237px auto;
    font-size: 26.400px;
    line-height: 30px;
    color: #9a9a9a;
}

.legend-item {
    display: flex;
    align-items: center;
    gap: 31px;
}

.mark-fail {
    width: 0;
    height: 0;
    border-left: 11px solid transparent;
    border-right: 11px solid transparent;
    border-bottom: 22px solid #ff3333;
}

.mark-avg {
    width: 22px;
    height: 22px;
    background-color: #ffa733;
}

.mark-pass {
    width: 22px;
    height: 22px;
    border-radius: 50%;
    background-color: #0cce6b;
}

.perf-divider {
    width: 2px;
    height: 157px;
    margin: 150px 0 0 19px;
    background-color: #444;
}

.thumb-frame {
    width: 389px;
    height: 443px;
    margin: 7px 0 0 167px;
    padding: 9px;
    border: 2px solid #444;
    border-radius: 6px;
}

.thumb {
    height: 100%;
    background-color: #111920;
    padding-top: 16px;
    display: flex;
    flex-direction: column;
    align-items: center;
    font-family: "Open Sans", sans-serif;
    font-size: 8.500px;
    line-height: 12px;
    color: #adbcc6;
}

.thumb-title {
    font-size: 16.500px;
    line-height: 22px;
    font-weight: 700;
    color: #f0f3f6;
}

.thumb-tag {
    margin-top: 27px;
}

.thumb-form {
    width: 184px;
}

.thumb-label {
    margin-top: 10px;
}

.thumb-label-first {
    margin-top: 13px;
}

.thumb-input {
    height: 27px;
    margin-top: 1px;
    border: 1px solid #2f3d48;
    border-radius: 2px;
}

.thumb-input-first {
    margin-top: 2px;
}

.thumb-submit {
    height: 26px;
    margin-top: 9px;
    background-color: #f2d5d2;
    border-radius: 1px;
    color: #111920;
    line-height: 27px;
    text-align: center;
}

.thumb-foot {
    margin-top: 10px;
}

.thumb-foot span {
    color: #1095c8;
}

.metrics-head {
    margin: 135px 54px 33px 26px;
    display: flex;
    justify-content: space-between;
    font-size: 26px;
    line-height: 30px;
    letter-spacing: 2.100px;
    color: #9a9a9a;
}

.metrics {
    margin-left: 26px;
    display: grid;
    grid-template-columns: 659px 657px;
    column-gap: 44px;
}

.metric {
    height: 172px;
    padding: 32px 0 0 31px;
    border-top: 2px solid #424242;
}

.metric:nth-child(n+3) {
    border-bottom: 2px solid #424242;
}

.metric-name {
    display: flex;
    align-items: center;
    gap: 31px;
    font-size: 26.600px;
    line-height: 34px;
    color: #f2f2f2;
}

.metric-value {
    margin: 11px 0 0 53px;
    font-size: 47px;
    line-height: 56px;
    color: #0cce6b;
}

/* ---- taskbar ---- */
.taskbar {
    height: 80px;
    flex: none;
    background-color: #1f2630;
    display: flex;
    align-items: center;
}

.tk-win { margin-left: 32px; }

.tk-search {
    width: 687px;
    height: 80px;
    margin-left: 33px;
    background-color: #f0f0f0;
    border: 2px solid #c8c8c8;
    padding-left: 22px;
    display: flex;
    align-items: center;
    gap: 24px;
    font-size: 28px;
    color: #222;
}

.tk-cortana { margin-left: 32px; }
.tk-tasks { margin-left: 64px; }

.tk-apps {
    margin-left: 38px;
    display: flex;
    height: 80px;
}

.app {
    width: 98px;
    height: 80px;
    padding-bottom: 8px;
    display: flex;
    align-items: center;
    justify-content: center;
    position: relative;
}

.app-current {
    background-color: #4f5660;
}

.running::after {
    content: "";
    position: absolute;
    left: 9px;
    right: 9px;
    bottom: 0;
    height: 4px;
    background-color: #76b9ed;
}

.app-current::after {
    left: 0;
    right: 0;
}

.running-multi::after {
    background: linear-gradient(to right, #76b9ed 78%, #4f84ab 78%);
}

.tk-badge {
    position: absolute;
    display: flex;
    align-items: center;
    justify-content: center;
    color: #fff;
    font-size: 22px;
    border-radius: 50%;
}

.tk-badge-mail {
    left: 39px;
    top: 38px;
    width: 56px;
    height: 34px;
    border-radius: 17px;
    background-color: #333b44;
    border: 2px solid #a0a0a0;
}

.tk-badge-discord {
    left: 49px;
    top: 38px;
    width: 26px;
    height: 28px;
    background-color: #ed5a5a;
    font-size: 18px;
}

.tk-badge-notify {
    left: 11px;
    top: -14px;
    width: 37px;
    height: 33px;
    background-color: #3a424c;
    border: 2px solid #8a8a8a;
    font-size: 20px;
}

.ws-logo {
    width: 46px;
    height: 46px;
    background: linear-gradient(135deg, #07c3f2, #087cfa 50%, #fcf84a);
    display: flex;
    align-items: center;
    justify-content: center;
}

.ws-box {
    width: 30px;
    height: 30px;
    background-color: #000;
    color: #fff;
    font-size: 17px;
    font-weight: 700;
    line-height: 18px;
    padding-left: 2px;
    display: block;
}

.ws-box i {
    width: 12px;
    height: 2px;
    margin-top: 5px;
    background-color: #fff;
}

.tray {
    display: flex;
    align-items: center;
    margin-left: 267px;
    color: #fff;
    font-size: 26.500px;
}

.tray-temp {
    width: 243px;
    margin-left: 19px;
    display: flex;
    justify-content: space-between;
    white-space: nowrap;
}

.tray-meet { margin-left: 23px; }
.tray-power { margin-left: 34px; }
.tray-wifi { margin-left: 39px; }
.tray-volume { margin-left: 33px; }
.tray-pen { margin-left: 41px; }

.tray-clock {
    width: 130px;
    margin-left: 25px;
    display: flex;
    flex-direction: column;
    align-items: center;
    gap: 8px;
    font-size: 22.500px;
    line-height: 28px;
    white-space: nowrap;
}

.tray-m {
    width: 36px;
    margin-left: 33px;
    border-left: 2px solid #fff;
    border-right: 2px solid #fff;
    font-size: 28px;
    font-weight: 700;
    line-height: 30px;
    text-align: center;
}

.tray-notify {
    margin-left: 54px;
    position: relative;
}
```
